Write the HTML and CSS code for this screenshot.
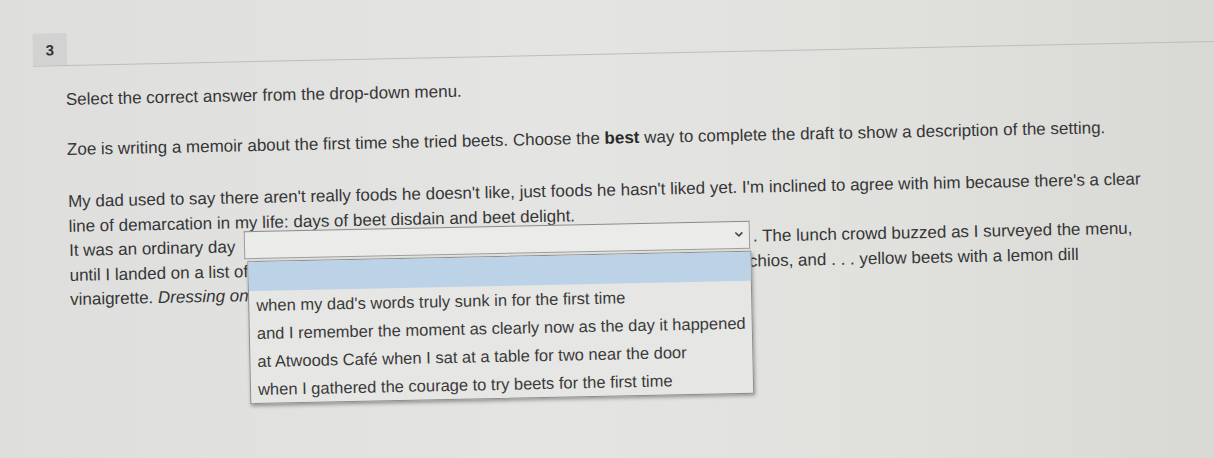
FILE: index.html
```html
<!DOCTYPE html>
<html lang="en">
<head>
    <meta charset="UTF-8">
    <meta name="viewport" content="width=device-width, initial-scale=1.0">
    <title>Question 3</title>
    <link rel="stylesheet" href="styles.css">
</head>
<body>
    <div class="sheet">
        <div class="question-head">
            <span class="q-num">3</span>
        </div>
        <div class="question-body">
            <p class="prompt">Select the correct answer from the drop-down menu.</p>
            <p class="task">Zoe is writing a memoir about the first time she tried beets. Choose the <b>best</b> way to complete the draft to show a description of the setting.</p>
            <div class="passage">
                <div>My dad used to say there aren't really foods he doesn't like, just foods he hasn't liked yet. I'm inclined to agree with him because there's a clear line of demarcation in my life: days of beet disdain and beet delight.</div>
                <div>It was an ordinary day <span class="dropdown"><span class="select-box"><svg class="chevron" width="10" height="7" viewBox="0 0 10 7"><path d="M1.5 1.5 L5 5 L8.5 1.5" fill="none" stroke="#444" stroke-width="1.6"/></svg></span><span class="options">
                            <span class="option blank"></span>
                            <span class="option">when my dad's words truly sunk in for the first time</span>
                            <span class="option">and I remember the moment as clearly now as the day it happened</span>
                            <span class="option">at Atwoods Café when I sat at a table for two near the door</span>
                            <span class="option">when I gathered the courage to try beets for the first time</span>
                        </span></span>. The lunch crowd buzzed as I surveyed the menu, until I landed on a list of salads: pickled red beets with goat cheese, cumin beets with pistachios, and . . . yellow beets with a lemon dill vinaigrette. <i>Dressing on the side</i>, I thought.</div>
            </div>
        </div>
    </div>
</body>
</html>
```

FILE: styles.css
```css
body {
    margin: 0;
    height: 458px;
    overflow: hidden;
    font-family: "Liberation Sans", Arial, sans-serif;
    color: #363636;
    background: linear-gradient(90deg, #dededd 0%, #e4e4e2 45%, #e0e0dd 75%, #d8d8d4 100%);
}
.sheet {
    padding: 33px 0 0 36px;
    transform: rotate(-1.2deg);
    transform-origin: 66px 200px;
}
.question-head {
    display: flex;
    width: 1320px;
    border-bottom: 1px solid #bdbdbb;
}
.q-num {
    width: 34px;
    height: 32px;
    display: flex;
    align-items: center;
    justify-content: center;
    background: #d2d2d0;
    font-size: 15px;
    font-weight: bold;
    color: #333;
}
.question-body {
    width: 1085px;
    padding: 22px 0 0 32px;
    font-size: 17px;
}
.question-body p {
    margin: 0;
}
.prompt {
    line-height: 24px;
}
.task {
    line-height: 24px;
    margin-top: 26px !important;
}
.task b {
    color: #2a2a2a;
}
.passage {
    margin-top: 28px;
    line-height: 24.5px;
}
.dropdown {
    position: relative;
    display: inline-block;
    vertical-align: middle;
    margin: -6px 3px 0 4px;
}
.select-box {
    box-sizing: border-box;
    width: 506px;
    height: 28px;
    display: flex;
    align-items: center;
    justify-content: flex-end;
    padding-right: 5px;
    background: #ebebea;
    border: 1px solid #9c9c9a;
    border-top-color: #8a8a88;
}
.chevron {
    display: block;
}
.options {
    position: absolute;
    top: 100%;
    left: 3px;
    z-index: 2;
    display: flex;
    flex-direction: column;
    width: 504px;
    margin-top: 2px;
    box-sizing: border-box;
    background: #e6e6e4;
    border: 1px solid #8e8e8c;
    box-shadow: 1px 2px 4px rgba(0, 0, 0, 0.35);
    font-size: 16.5px;
    line-height: 28px;
    color: #3a3a3a;
}
.option {
    padding-left: 7px;
    white-space: nowrap;
}
.option.blank {
    height: 29px;
    background: #bcd2e6;
}
```
